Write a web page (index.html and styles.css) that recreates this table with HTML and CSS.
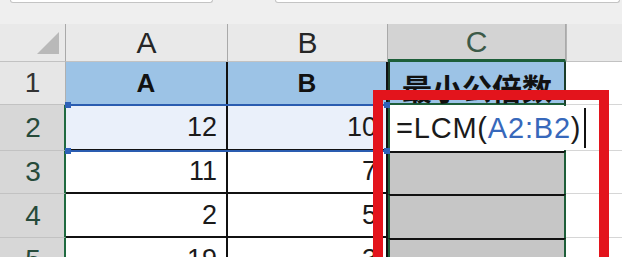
FILE: index.html
```html
<!DOCTYPE html>
<html lang="zh-CN">
<head>
    <meta charset="UTF-8">
    <meta name="viewport" content="width=device-width, initial-scale=1.0">
    <title>最小公倍数</title>
    <link rel="stylesheet" href="styles.css">
</head>
<body>
    <div class="wrap">
        <div class="topbar">
            <div class="namebox"></div>
            <div class="formulabar"></div>
        </div>

        <div class="sheet">
            <div class="corner">
                <svg width="24" height="24" viewBox="0 0 24 24"><polygon points="23,1 23,23 1,23" fill="#b9b9b9"/></svg>
            </div>
            <div class="colhead">A</div>
            <div class="colhead">B</div>
            <div class="colhead sel">C</div>
            <div class="colhead rest"></div>

            <div class="rowhead">1</div>
            <div class="cell title">A</div>
            <div class="cell title">B</div>
            <div class="cell title c-col">最小公倍数</div>
            <div class="cell blank"></div>

            <div class="rowhead sel">2</div>
            <div class="cell num ref">12</div>
            <div class="cell num ref">10</div>
            <div class="cell c-col active"></div>
            <div class="cell blank"></div>

            <div class="rowhead sel">3</div>
            <div class="cell num">11</div>
            <div class="cell num">7</div>
            <div class="cell c-col picked"></div>
            <div class="cell blank"></div>

            <div class="rowhead sel">4</div>
            <div class="cell num">2</div>
            <div class="cell num">5</div>
            <div class="cell c-col picked"></div>
            <div class="cell blank"></div>

            <div class="rowhead sel">5</div>
            <div class="cell num">19</div>
            <div class="cell num">3</div>
            <div class="cell c-col picked"></div>
            <div class="cell blank"></div>
        </div>

        <!-- range referenced by the formula -->
        <div class="range">
            <span class="handle tl"></span>
            <span class="handle bl"></span>
            <span class="handle tr"></span>
            <span class="handle br"></span>
        </div>

        <!-- in-cell editor for C2 -->
        <div class="editor">=LCM(<span class="refname">A2:B2</span>)<span class="caret"></span></div>

        <div class="frame"></div>
    </div>
</body>
</html>
```

FILE: styles.css
```css
body {
    margin: 0;
    background: #fff;
    font-family: "Liberation Sans", Arial, "Noto Sans CJK SC", sans-serif;
    overflow: hidden;
}
.wrap {
    position: relative;
    width: 622px;
    height: 257px;
    overflow: hidden;
}
.topbar {
    height: 24px;
    background: #efefef;
    display: flex;
}
.namebox,
.formulabar {
    height: 2px;
    background: #fff;
    border: 1px solid #c4c4c4;
    border-top: none;
    border-radius: 0 0 3px 3px;
}
.namebox {
    margin-left: 10px;
    width: 201px;
}
.formulabar {
    margin-left: 62px;
    width: 343px;
}

.sheet {
    display: grid;
    grid-template-columns: 66px 162px 160px 178px 1fr;
    grid-template-rows: 38px 43px 46px 43px 44px 44px;
}
.corner {
    background: #e9e9e9;
    border-right: 1px solid #a9a9a9;
    border-bottom: 1px solid #c2c2c2;
    box-sizing: border-box;
    display: flex;
    justify-content: flex-end;
    align-items: flex-end;
    padding: 0 5px 6px 0;
}
.colhead {
    background: #e9e9e9;
    border-right: 1px solid #a9a9a9;
    border-bottom: 1px solid #c2c2c2;
    box-sizing: border-box;
    font-size: 30px;
    color: #262626;
    display: flex;
    align-items: center;
    justify-content: center;
}
.colhead.sel {
    background: #d3d3d3;
    color: #3c5a48;
    border-bottom: 3px solid #1d5e39;
}
.colhead.rest {
    border-right: none;
    border-left: 1px solid #b5b5b5;
}
.rowhead {
    background: #e6e6e6;
    border-right: 1px solid #b0b0b0;
    border-bottom: 1px solid #c2c2c2;
    box-sizing: border-box;
    font-size: 28px;
    color: #333;
    display: flex;
    align-items: center;
    justify-content: center;
}
.rowhead.sel {
    background: #d7d7d7;
    color: #264a3a;
    border-right: 2px solid #1f6a40;
    padding-left: 2px;
}

.cell {
    box-sizing: border-box;
    display: flex;
    align-items: center;
}
.title {
    background: #9cc3e6;
    font-weight: bold;
    font-size: 26px;
    color: #111;
    justify-content: center;
    border-right: 2px solid #111;
}
.title.c-col {
    font-family: "Noto Sans CJK SC", sans-serif;
    font-size: 30px;
    padding-top: 8px;
    border-bottom: 2px solid #1d5e39;
}
.num {
    justify-content: flex-end;
    padding-right: 9px;
    font-size: 27px;
    color: #1a1a1a;
    border-right: 2px solid #111;
    border-bottom: 2px solid #111;
}
.num.ref {
    background: #eaf0fa;
}
.c-col {
    border-left: 2px solid #1d5e39;
    border-right: 2px solid #1d5e39;
}
.title.c-col {
    border-left-color: #1c3d2a;
    border-right-color: #1c3d2a;
}
.picked {
    background: #c6c6c6;
    border-top: 2px solid #111;
}
.active {
    background: #fff;
}
.blank {
    border-bottom: 1px solid #d6d6d6;
}

/* blue outline around the referenced cells */
.range {
    position: absolute;
    left: 68px;
    top: 104px;
    width: 318px;
    height: 44px;
    border-top: 2px solid #2a5cb0;
    border-bottom: 2px solid #2a5cb0;
}
.handle {
    position: absolute;
    width: 6px;
    height: 6px;
    background: #2e62b8;
}
.handle.tl { left: -3px; top: -4px; }
.handle.bl { left: -3px; bottom: -4px; }
.handle.tr { right: -4px; top: -4px; }
.handle.br { right: -4px; bottom: -4px; }

.editor {
    position: absolute;
    left: 390px;
    top: 106px;
    height: 44px;
    padding: 0 12px 0 6px;
    background: #fff;
    display: flex;
    align-items: center;
    font-size: 29px;
    letter-spacing: 0.8px;
    color: #1a1a1a;
}
.refname {
    color: #3768bb;
}
.caret {
    width: 2px;
    height: 40px;
    margin-left: 3px;
    background: #111;
}

.frame {
    position: absolute;
    left: 373px;
    top: 90px;
    width: 216px;
    height: 200px;
    border: 10px solid #e3141c;
}
```
